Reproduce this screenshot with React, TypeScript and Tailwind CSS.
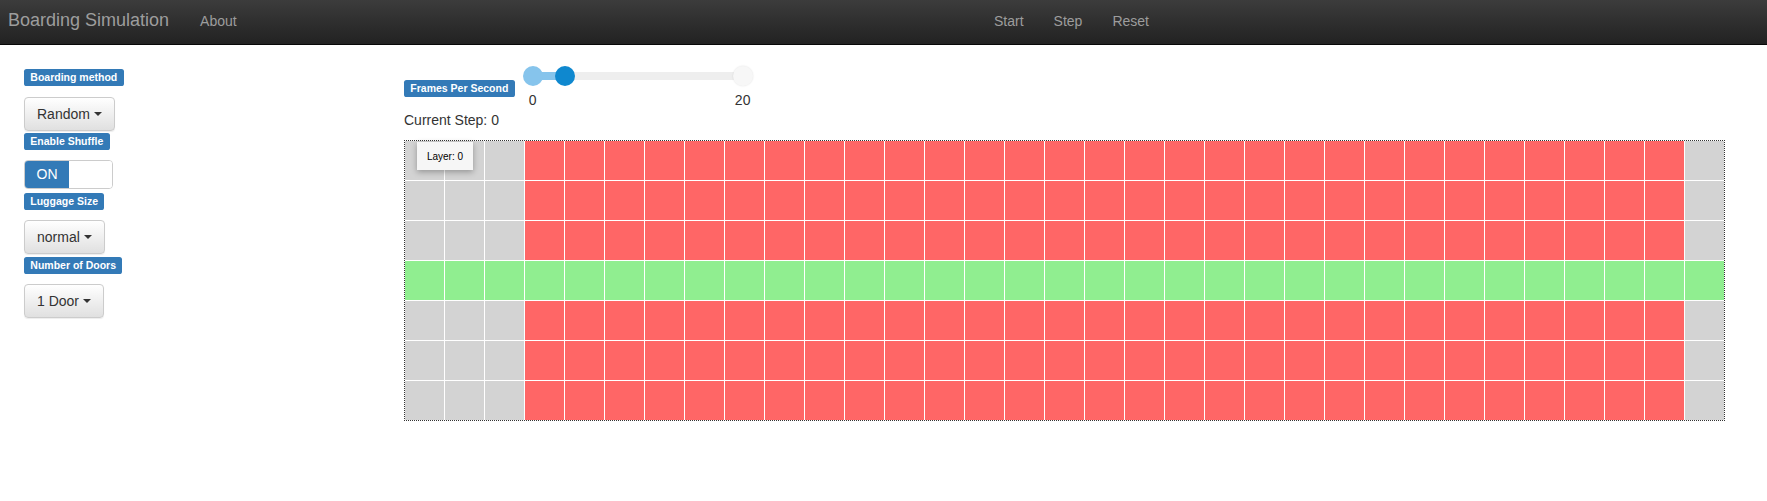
import React from "react";

function Label({ children, className = "" }: { children: React.ReactNode; className?: string }) {
  return (
    <span
      className={
        "inline-block bg-[#337ab7] text-white font-bold text-[10.5px] leading-[12px] pt-[2px] pb-[3px] px-[6.3px] rounded-[2.6px] whitespace-nowrap " +
        className
      }
    >
      {children}
    </span>
  );
}

function DropBtn({ children, className = "" }: { children: React.ReactNode; className?: string }) {
  return (
    <button
      className={
        "flex items-center h-[34px] px-[12px] border border-[#cccccc] rounded-[4px] bg-linear-to-b from-white to-[#e0e0e0] text-[14px] leading-[20px] text-[#333] shadow-[inset_0_1px_0_rgba(255,255,255,0.15),0_1px_1px_rgba(0,0,0,0.075)] " +
        className
      }
    >
      <span>{children}</span>
      <span className="ml-[4px] inline-block w-0 h-0 border-t-[4px] border-t-[#333] border-x-[4px] border-x-transparent" />
    </button>
  );
}

function cellClass(r: number, c: number) {
  if (r === 3) return "bg-[#90ee90]";
  if (c < 3 || c === 32) return "bg-[#d3d3d3]";
  return "bg-[#ff6666]";
}

export default function App() {
  const rows = Array.from({ length: 7 }, (_, i) => i);
  const cols = Array.from({ length: 33 }, (_, i) => i);
  return (
    <div className="font-['Liberation_Sans',Arial,sans-serif] text-[#333] bg-white min-h-[501px]">
      <nav className="h-[45px] flex bg-linear-to-b from-[#3c3c3c] to-[#222222] border-b border-[#080808] text-[#9d9d9d]">
        <div className="w-[994px] shrink-0 flex items-start">
          <span className="pl-[8px] pt-[10px] text-[18px] leading-[20px] whitespace-nowrap">Boarding Simulation</span>
          <span className="ml-[31px] pt-[11px] text-[14px] leading-[21px]">About</span>
        </div>
        <div className="flex items-start gap-[30px] pt-[11px] text-[14px] leading-[21px]">
          <span>Start</span>
          <span>Step</span>
          <span>Reset</span>
        </div>
      </nav>

      <div className="flex">
        <aside className="w-[404px] shrink-0 pl-[24px] pt-[24px] flex flex-col items-start">
          <Label>Boarding method</Label>
          <DropBtn className="mt-[11px]">Random</DropBtn>
          <Label className="mt-[2px]">Enable Shuffle</Label>
          <div className="mt-[10px] flex h-[29px] w-[89px] border border-[#cccccc] rounded-[4px] overflow-hidden">
            <div className="w-[44px] bg-[#337ab7] text-white text-[14px] flex items-center justify-center">ON</div>
            <div className="flex-1 bg-white" />
          </div>
          <Label className="mt-[4px]">Luggage Size</Label>
          <DropBtn className="mt-[10px]">normal</DropBtn>
          <Label className="mt-[3px]">Number of Doors</Label>
          <DropBtn className="mt-[10px]">1 Door</DropBtn>
        </aside>

        <main className="pt-[21px]">
          <div className="flex items-start">
            <Label className="mt-[14px]">Frames Per Second</Label>
            <div className="ml-[8px] w-[230px]">
              <div className="relative h-[20px]">
                <div className="absolute left-[10px] right-[10px] top-[6px] h-[8px] rounded-full bg-[#eeeeee]" />
                <div className="absolute left-[10px] w-[32px] top-[6px] h-[8px] bg-[#86c4ec]" />
                <div className="absolute left-0 top-0 w-[20px] h-[20px] rounded-full bg-[#86c4ec]" />
                <div className="absolute left-[32px] top-0 w-[20px] h-[20px] rounded-full bg-[#0f88cf]" />
                <div className="absolute right-0 top-0 w-[20px] h-[20px] rounded-full bg-[#f7f7f7] shadow-[0_0_2px_rgba(0,0,0,0.12)]" />
              </div>
              <div className="mt-[6px] flex justify-between text-[14px] leading-[16px] text-[#333]">
                <span className="w-[20px] text-center">0</span>
                <span className="w-[20px] text-center">20</span>
              </div>
            </div>
          </div>
          <div className="mt-[2px] text-[14px] leading-[20px] text-[#333]">Current Step: 0</div>
          <div className="mt-[10px] relative w-fit border border-dotted border-[#333]">
            <div className="grid grid-cols-[repeat(33,39px)] grid-rows-[repeat(7,39px)] gap-px bg-white">
              {rows.map((r) =>
                cols.map((c) => <div key={r + "-" + c} className={cellClass(r, c)} />)
              )}
            </div>
            <div className="absolute left-[12px] top-[1px] w-[56px] h-[28px] bg-[#f6f6f6] shadow-[0_2px_6px_rgba(0,0,0,0.3)] flex items-center justify-center text-[10px] text-black">
              Layer: 0
            </div>
          </div>
        </main>
      </div>
    </div>
  );
}
